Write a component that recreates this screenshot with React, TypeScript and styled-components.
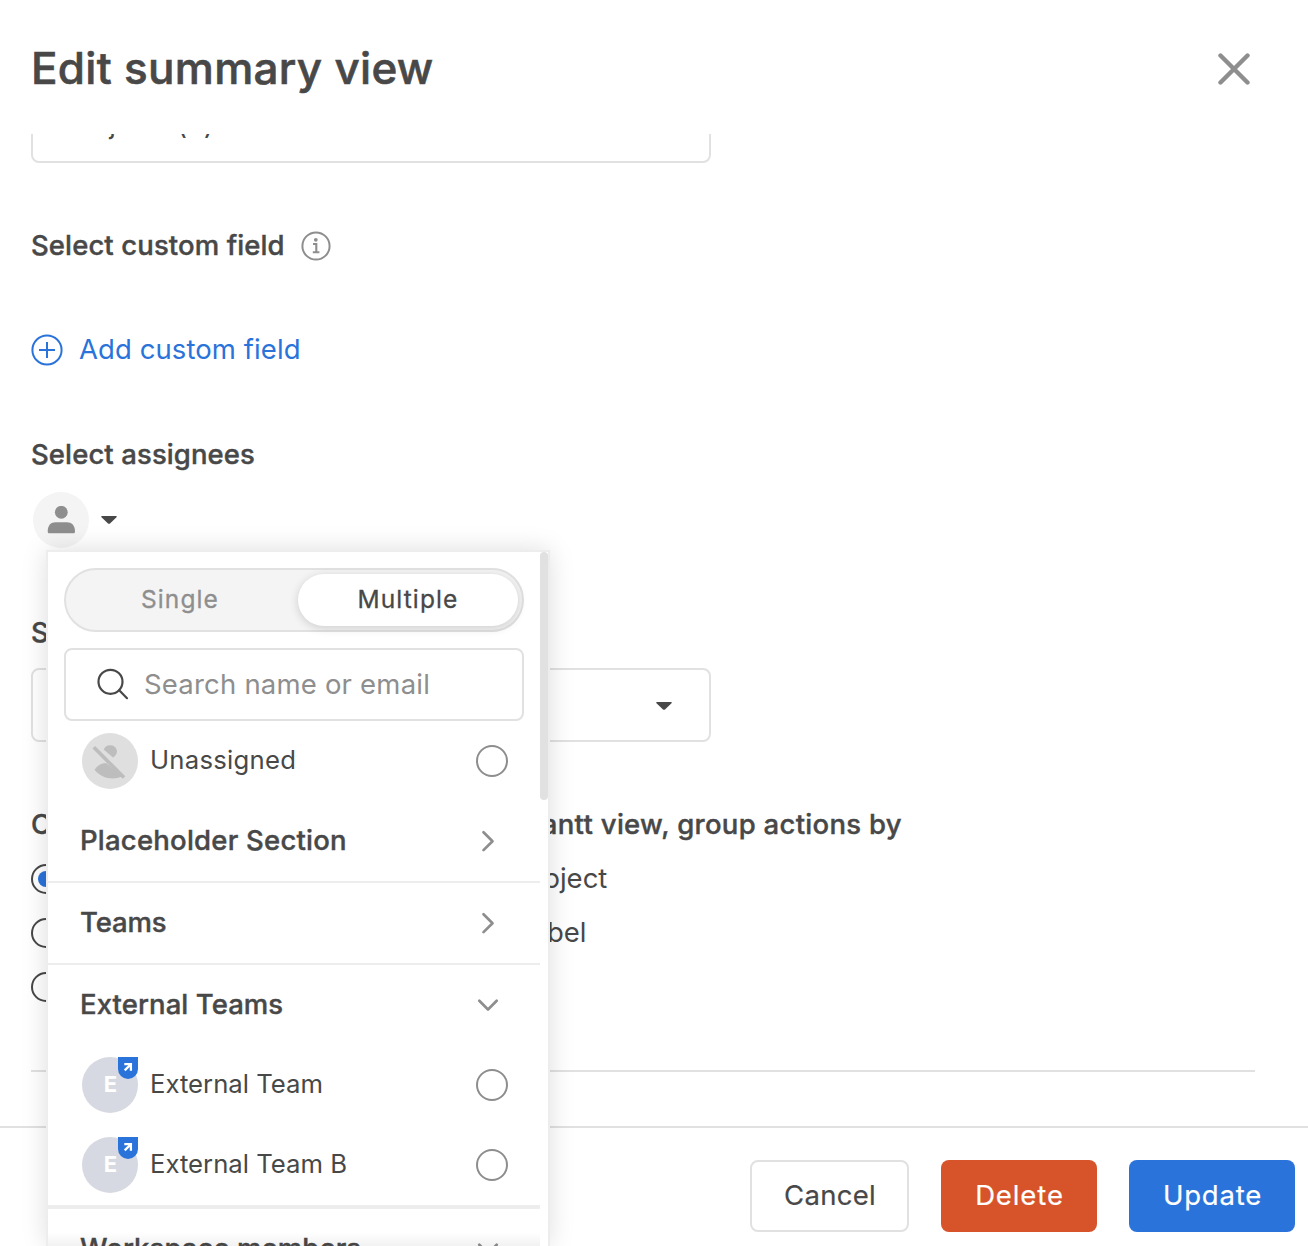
import React from 'react';
import styled, { createGlobalStyle } from 'styled-components';

const ink = '#484848';
const grey = '#8e8e8e';
const line = '#e1e1e1';
const blue = '#2a73da';

const Global = createGlobalStyle`
  * { box-sizing: border-box; }
  body { margin: 0; background: #fff; }
`;

const Modal = styled.div`
  display: flex;
  flex-direction: column;
  width: 1308px;
  height: 1246px;
  overflow: hidden;
  background: #fff;
  color: ${ink};
  font: 400 27.5px/36px Inter, "Liberation Sans", sans-serif;
`;

const Header = styled.header`
  z-index: 1;
  flex: none;
  display: flex;
  align-items: center;
  justify-content: space-between;
  height: 134px;
  padding: 4px 58px 0 31px;
  background: #fff;
`;

const Title = styled.h1`
  margin: 0;
  padding-bottom: 2px;
  font-size: 44px;
  line-height: 60px;
  font-weight: 500;
  -webkit-text-stroke: 0.6px currentColor;
  letter-spacing: 0.3px;
`;

const IconButton = styled.button`
  display: flex;
  padding: 0;
  border: 0;
  background: none;
`;

const Body = styled.main`
  flex: 1;
  min-height: 0;
  padding: 0 53px 0 31px;
`;

const SelectBox = styled.div<{ $scrolled?: boolean }>`
  display: flex;
  align-items: center;
  justify-content: space-between;
  width: 680px;
  height: 74px;
  margin-top: ${p => (p.$scrolled ? -45 : 18)}px;
  padding: ${p => (p.$scrolled ? '0 37px 4px 33px' : '2px 37px 0 33px')};
  border: 2px solid ${line};
  border-radius: 8px;
  letter-spacing: -0.25px;
`;

const Label = styled.h2<{ $top: number; $track?: number }>`
  display: flex;
  align-items: center;
  gap: 16px;
  height: 36px;
  margin: ${p => p.$top}px 0 0;
  font-size: 27.5px;
  line-height: 36px;
  font-weight: 500;
  -webkit-text-stroke: 0.4px currentColor;
  letter-spacing: ${p => p.$track ?? 0.1}px;
  white-space: nowrap;
  svg { position: relative; top: 1px; }
`;

const AddLink = styled.a`
  display: flex;
  align-items: center;
  gap: 16px;
  height: 36px;
  margin-top: 69px;
  color: ${blue};
  letter-spacing: 0.08px;
`;

const Raised = styled.span`
  padding-bottom: 2px;
`;

const Assignee = styled.div`
  position: relative;
  display: flex;
  align-items: center;
  gap: 12px;
  margin-top: 20px;
  padding-left: 2px;
`;

const Avatar = styled.span<{ $bg: string }>`
  position: relative;
  flex: none;
  display: flex;
  align-items: center;
  justify-content: center;
  width: 56px;
  height: 56px;
  border-radius: 50%;
  background: ${p => p.$bg};
  color: #fff;
  font-size: 22px;
  font-weight: 700;
`;

const Initial = styled.span`
  padding: 0 0 2px 1px;
`;

const Badge = styled.span`
  position: absolute;
  top: 0;
  right: 0;
  width: 20px;
  height: 22px;
  border-radius: 0 0 10px 10px;
  background: ${blue};
  svg { display: block; }
`;

const Groups = styled.div`
  display: grid;
  grid-template-columns: 439px 1fr;
  margin-top: 64px;
`;

const Option = styled.div`
  display: flex;
  align-items: center;
  gap: 16px;
  height: 54px;
`;

const Options = styled.div`
  margin-top: 10px;
`;

const Radio = styled.span<{ $size: number; $color: string; $on?: boolean }>`
  flex: none;
  display: flex;
  align-items: center;
  justify-content: center;
  width: ${p => p.$size}px;
  height: ${p => p.$size}px;
  border: 2px solid ${p => p.$color};
  border-radius: 50%;
  background: #fff;
  &::after {
    content: "";
    width: 16px;
    height: 16px;
    border-radius: 50%;
    background: ${p => (p.$on ? blue : 'transparent')};
  }
`;

const Rule = styled.hr`
  height: 2px;
  margin: 56px 0 0;
  border: 0;
  background: ${line};
`;

const Footer = styled.footer`
  flex: none;
  display: flex;
  justify-content: flex-end;
  gap: 32px;
  height: 120px;
  padding: 32px 13px 0 0;
  border-top: 2px solid ${line};
`;

const Button = styled.button<{ $w: number; $bg?: string; $track: number }>`
  width: ${p => p.$w}px;
  height: 72px;
  padding: 0 0 2px 1px;
  border: ${p => (p.$bg ? '0' : `2px solid ${line}`)};
  border-radius: 8px;
  background: ${p => p.$bg ?? '#fff'};
  color: ${p => (p.$bg ? '#fff' : ink)};
  font: inherit;
  -webkit-text-stroke: 0.2px currentColor;
  letter-spacing: ${p => p.$track}px;
`;

const Popup = styled.div`
  position: absolute;
  z-index: 5;
  top: 58px;
  left: 15px;
  display: flex;
  width: 504px;
  height: 696px;
  border: 2px solid #ededed;
  border-bottom: 0;
  background: #fff;
  box-shadow: 0 0 24px rgba(0, 0, 0, 0.13);
`;

const PopupList = styled.div`
  position: relative;
  width: 492px;
  overflow: hidden;
  &::after {
    content: "";
    position: absolute;
    left: 0;
    right: 0;
    bottom: 0;
    height: 14px;
    background: linear-gradient(rgba(0, 0, 0, 0), rgba(0, 0, 0, 0.05));
  }
`;

const Thumb = styled.div`
  width: 8px;
  height: 248px;
  border-radius: 4px;
  background: ${line};
`;

const Toggle = styled.div`
  display: grid;
  grid-template-columns: 230px 220px;
  width: 460px;
  height: 64px;
  margin: 16px 16px 0;
  padding: 4px 4px 4px 2px;
  border: 2px solid ${line};
  border-radius: 32px;
  background: #f4f4f4;
`;

const Segment = styled.div<{ $on?: boolean }>`
  display: flex;
  align-items: center;
  justify-content: center;
  height: 52px;
  padding: 0 ${p => (p.$on ? 0 : 6)}px 2px 0;
  border-radius: 26px;
  color: ${p => (p.$on ? ink : grey)};
  background: ${p => (p.$on ? '#fff' : 'transparent')};
  box-shadow: ${p => (p.$on ? '0 2px 10px rgba(0, 0, 0, 0.16)' : 'none')};
  font-size: 24.5px;
  -webkit-text-stroke: 0.3px currentColor;
  letter-spacing: 1.1px;
`;

const Search = styled.div`
  display: flex;
  align-items: center;
  gap: 14px;
  width: 460px;
  height: 73px;
  margin: 16px 16px 0;
  padding: 0 30px;
  border: 2px solid ${line};
  border-radius: 8px;
  color: ${grey};
  letter-spacing: 0.2px;
`;

const Person = styled.div<{ $track?: number }>`
  display: flex;
  align-items: center;
  gap: 12px;
  height: 80px;
  padding: 0 32px 0 34px;
  font-size: 25.7px;
  letter-spacing: ${p => p.$track ?? 0}px;
`;

const PersonName = styled.span`
  flex: 1;
  padding-bottom: 2px;
`;

const Section = styled.div<{ $rule?: boolean; $track?: number }>`
  display: flex;
  align-items: center;
  justify-content: space-between;
  height: ${p => (p.$rule ? 82 : 80)}px;
  padding: 0 40px 0 32px;
  border-bottom: ${p => (p.$rule ? '2px solid #ededed' : '0')};
  font-weight: 500;
  -webkit-text-stroke: 0.4px currentColor;
  letter-spacing: ${p => p.$track ?? 0.08}px;
`;

const ThickRule = styled.div`
  height: 4px;
  background: #ededed;
`;

const Caret = () => (
  <svg width="16" height="8" viewBox="0 0 16 8"><path d="M1 0h14c.8 0 1.100.8.5 1.300L9 7.400c-.6.5-1.400.5-2 0L.5 1.300C-.1.8.2 0 1 0z" fill={ink} /></svg>
);

const Chevron = ({ down }: { down?: boolean }) => (
  <svg width="24" height="24" viewBox="0 0 24 24" fill="none" stroke={grey} strokeWidth="2.700" strokeLinecap="round" strokeLinejoin="round">
    <path d={down ? 'M3.300 7.800 12 16.500l8.700-8.700' : 'M7.500 3.300l9 8.900-9 8.900'} />
  </svg>
);

const TeamAvatar = () => (
  <Avatar $bg="#d6d9e1">
    <Initial>E</Initial>
    <Badge>
      <svg width="20" height="22" viewBox="0 0 20 22" fill="none" stroke="#fff" strokeWidth="2.300">
        <path d="M6.300 7.200h6.600v6.600M12.900 7.200l-6.200 6.200" />
      </svg>
    </Badge>
  </Avatar>
);

const AssigneePopup = () => (
  <Popup>
    <PopupList>
      <Toggle>
        <Segment>Single</Segment>
        <Segment $on>Multiple</Segment>
      </Toggle>
      <Search>
        <svg width="34" height="34" viewBox="0 0 34 34" fill="none" stroke={ink} strokeWidth="2.200" strokeLinecap="round">
          <circle cx="14.500" cy="13.800" r="12" /><path d="M23.200 22.300 31 30.200" />
        </svg>
        <Raised>Search name or email</Raised>
      </Search>
      <Person $track={0.25}>
        <Avatar $bg="#dfdfdf">
          <svg width="56" height="56" viewBox="0 0 56 56" fill="#bdbdbd">
            <path d="M21.700 16.500a7 7 0 0 1 13.300 1.500c0 3-1.500 5-4 6.500zM24 30 40.500 43c-6 3.600-19.500 4.300-28-6.300 3.300-4.400 6.800-6.500 11.500-6.700z" />
            <path d="M11.800 14.200 42 44.600" stroke="#bdbdbd" strokeWidth="3.600" />
          </svg>
        </Avatar>
        <PersonName>Unassigned</PersonName>
        <Radio $size={32} $color={grey} />
      </Person>
      <Section $rule $track={0.22}><Raised>Placeholder Section</Raised><Chevron /></Section>
      <Section $rule $track={-0.1}><Raised>Teams</Raised><Chevron /></Section>
      <Section><Raised>External Teams</Raised><Chevron down /></Section>
      <Person><TeamAvatar /><PersonName>External Team</PersonName><Radio $size={32} $color={grey} /></Person>
      <Person><TeamAvatar /><PersonName>External Team B</PersonName><Radio $size={32} $color={grey} /></Person>
      <ThickRule />
      <Section><Raised>Workspace members</Raised><Chevron down /></Section>
    </PopupList>
    <Thumb />
  </Popup>
);

export default function App() {
  return (
    <Modal>
      <Global />
      <Header>
        <Title>Edit summary view</Title>
        <IconButton aria-label="Close">
          <svg width="32" height="32" viewBox="0 0 32 32" stroke={grey} strokeWidth="4.400" strokeLinecap="round">
            <path d="M2.500 2.500l27 27M29.500 2.500l-27 27" />
          </svg>
        </IconButton>
      </Header>
      <Body>
        <SelectBox $scrolled>Projects (6)</SelectBox>
        <Label $top={64}>
          Select custom field
          <svg width="30" height="30" viewBox="0 0 30 30" fill="none" stroke={grey} strokeWidth="2">
            <circle cx="15" cy="15" r="13.600" />
            <circle cx="14.800" cy="8.800" r="1.900" fill={grey} stroke="none" />
            <path d="M12 13h3.300v8M11.800 21.200h6.600" strokeWidth="2.100" />
          </svg>
        </Label>
        <AddLink>
          <svg width="32" height="32" viewBox="0 0 32 32" fill="none" stroke={blue} strokeWidth="2">
            <circle cx="16" cy="16" r="14.600" /><path d="M8 16h16M16 8v16" />
          </svg>
          <Raised>Add custom field</Raised>
        </AddLink>
        <Label $top={68}>Select assignees</Label>
        <Assignee>
          <Avatar $bg="#f4f4f4">
            <svg width="28" height="28" viewBox="0 0 28 28" fill={grey}>
              <circle cx="14.300" cy="6.300" r="6.400" />
              <path d="M.7 25.500c0-6 3-9.200 8-9.200h11c5 0 8.300 3.200 8.300 9.200 0 1.300-.7 1.800-1.800 1.800H2.500C1.400 27.300.7 26.800.7 25.500z" />
            </svg>
          </Avatar>
          <Caret />
          <AssigneePopup />
        </Assignee>
        <Label $top={66}>Select label</Label>
        <SelectBox><span>All</span><Caret /></SelectBox>
        <Groups>
          <div>
            <Label $top={0}>Color actions by</Label>
            <Options>
              <Option><Radio $size={30} $color={ink} $on /><Raised>Status</Raised></Option>
              <Option><Radio $size={30} $color={ink} /><Raised>Project</Raised></Option>
              <Option><Radio $size={30} $color={ink} /><Raised>Label</Raised></Option>
            </Options>
          </div>
          <div>
            <Label $top={0} $track={0.3}>For Gantt view, group actions by</Label>
            <Options>
              <Option><Radio $size={30} $color={ink} $on /><Raised>Project</Raised></Option>
              <Option><Radio $size={30} $color={ink} /><Raised>Label</Raised></Option>
            </Options>
          </div>
        </Groups>
        <Rule />
      </Body>
      <Footer>
        <Button $w={159} $track={0.3}>Cancel</Button>
        <Button $w={156} $bg="#d75329" $track={0.9}>Delete</Button>
        <Button $w={166} $bg={blue} $track={0.8}>Update</Button>
      </Footer>
    </Modal>
  );
}
